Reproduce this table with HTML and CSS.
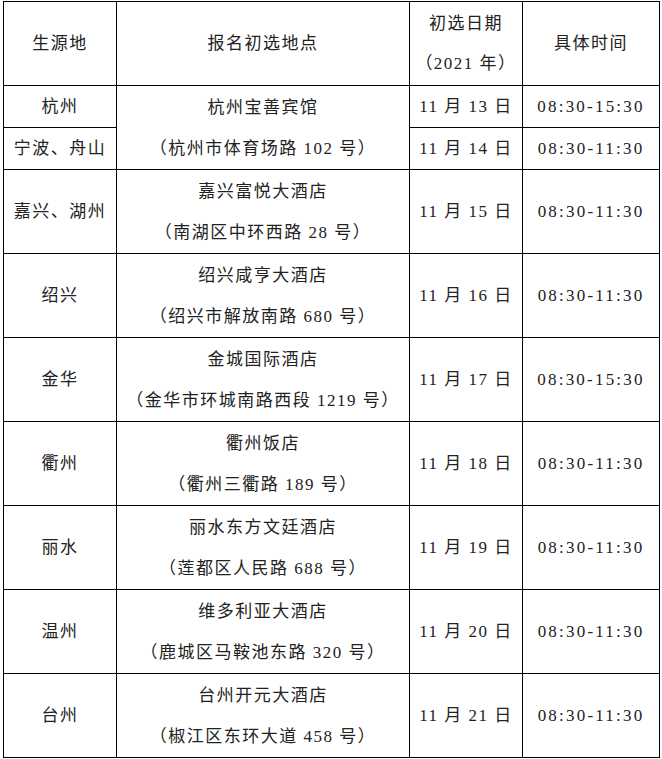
FILE: index.html
```html
<!DOCTYPE html>
<html lang="zh">
<head>
<meta charset="utf-8">
<title>报名初选地点</title>
<link rel="stylesheet" href="styles.css">
</head>
<body>
<table class="sched">
  <colgroup>
    <col class="c1"><col class="c2"><col class="c3"><col class="c4">
  </colgroup>
  <tr class="head">
    <td>生源地</td>
    <td>报名初选地点</td>
    <td class="two"><div>初选日期</div><div>（2021 年）</div></td>
    <td>具体时间</td>
  </tr>
  <tr class="half">
    <td>杭州</td>
    <td rowspan="2" class="two"><div>杭州宝善宾馆</div><div>（杭州市体育场路 102 号）</div></td>
    <td>11 月 13 日</td>
    <td class="t">08:30-15:30</td>
  </tr>
  <tr class="half">
    <td>宁波、舟山</td>
    <td>11 月 14 日</td>
    <td class="t">08:30-11:30</td>
  </tr>
  <tr class="row">
    <td>嘉兴、湖州</td>
    <td class="two"><div>嘉兴富悦大酒店</div><div>（南湖区中环西路 28 号）</div></td>
    <td>11 月 15 日</td>
    <td class="t">08:30-11:30</td>
  </tr>
  <tr class="row">
    <td>绍兴</td>
    <td class="two"><div>绍兴咸亨大酒店</div><div>（绍兴市解放南路 680 号）</div></td>
    <td>11 月 16 日</td>
    <td class="t">08:30-11:30</td>
  </tr>
  <tr class="row">
    <td>金华</td>
    <td class="two"><div>金城国际酒店</div><div>（金华市环城南路西段 1219 号）</div></td>
    <td>11 月 17 日</td>
    <td class="t">08:30-15:30</td>
  </tr>
  <tr class="row">
    <td>衢州</td>
    <td class="two"><div>衢州饭店</div><div>（衢州三衢路 189 号）</div></td>
    <td>11 月 18 日</td>
    <td class="t">08:30-11:30</td>
  </tr>
  <tr class="row">
    <td>丽水</td>
    <td class="two"><div>丽水东方文廷酒店</div><div>（莲都区人民路 688 号）</div></td>
    <td>11 月 19 日</td>
    <td class="t">08:30-11:30</td>
  </tr>
  <tr class="row">
    <td>温州</td>
    <td class="two"><div>维多利亚大酒店</div><div>（鹿城区马鞍池东路 320 号）</div></td>
    <td>11 月 20 日</td>
    <td class="t">08:30-11:30</td>
  </tr>
  <tr class="row">
    <td>台州</td>
    <td class="two"><div>台州开元大酒店</div><div>（椒江区东环大道 458 号）</div></td>
    <td>11 月 21 日</td>
    <td class="t">08:30-11:30</td>
  </tr>
</table>
</body>
</html>
```

FILE: styles.css
```css
html, body {
  margin: 0;
  padding: 0;
  background: #ffffff;
}
body {
  padding: 1px 0 0 3px;
  font-family: "Liberation Serif", "Noto Sans CJK SC", serif;
  font-size: 17px;
  color: #222222;
}
.sched {
  border-collapse: collapse;
  table-layout: fixed;
  width: 656px;
}
.c1 { width: 113px; }
.c2 { width: 293px; }
.c3 { width: 113px; }
.c4 { width: 137px; }
.sched td {
  border: 1px solid #000000;
  padding: 0;
  text-align: center;
  vertical-align: middle;
  letter-spacing: 1.5px;
  line-height: 20px;
  white-space: nowrap;
}
.head { height: 84px; }
.half { height: 42px; }
.row { height: 84px; }
.sched td.two { line-height: 41px; }
.head td.two { line-height: 40px; }
.sched td.t { letter-spacing: 2.2px; }
```
